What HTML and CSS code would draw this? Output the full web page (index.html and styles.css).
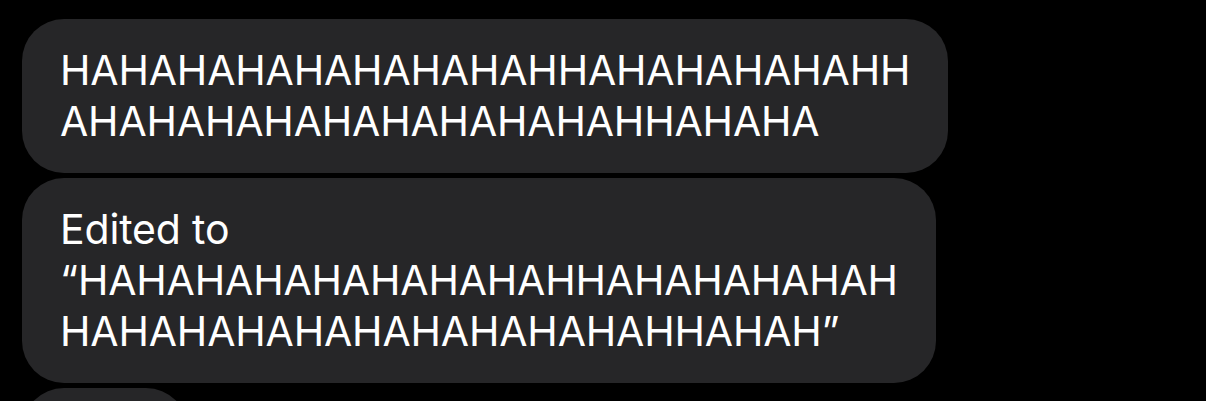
FILE: index.html
```html
<!DOCTYPE html>
<html lang="en">
<head>
<meta charset="utf-8">
<title>Messages</title>
<link rel="stylesheet" href="styles.css">
</head>
<body>
  <main class="thread">
    <div class="bubble">HAHAHAHAHAHAHAHAHHAHAHAHAHAHH<br>AHAHAHAHAHAHAHAHAHAHHAHAHA</div>
    <div class="bubble">Edited to<br>“HAHAHAHAHAHAHAHAHHAHAHAHAHAH<br>HAHAHAHAHAHAHAHAHAHAHHAHAH”</div>
    <div class="bubble bubble-short"></div>
  </main>
</body>
</html>
```

FILE: styles.css
```css
html, body {
  margin: 0;
  padding: 0;
  background: #000;
  height: 100%;
  overflow: hidden;
}

.thread {
  display: flex;
  flex-direction: column;
  align-items: flex-start;
  gap: 5px;
  padding: 19px 0 0 22px;
}

.bubble {
  background: #262628;
  color: #fff;
  font-family: Inter, "Noto Sans", sans-serif;
  font-size: 41px;
  line-height: 51px;
  letter-spacing: -0.17px;
  white-space: nowrap;
  padding: 26px 38px 26px 38px;
  border-radius: 42px;
}

.bubble-short {
  width: 90px;
  height: 60px;
}
```
